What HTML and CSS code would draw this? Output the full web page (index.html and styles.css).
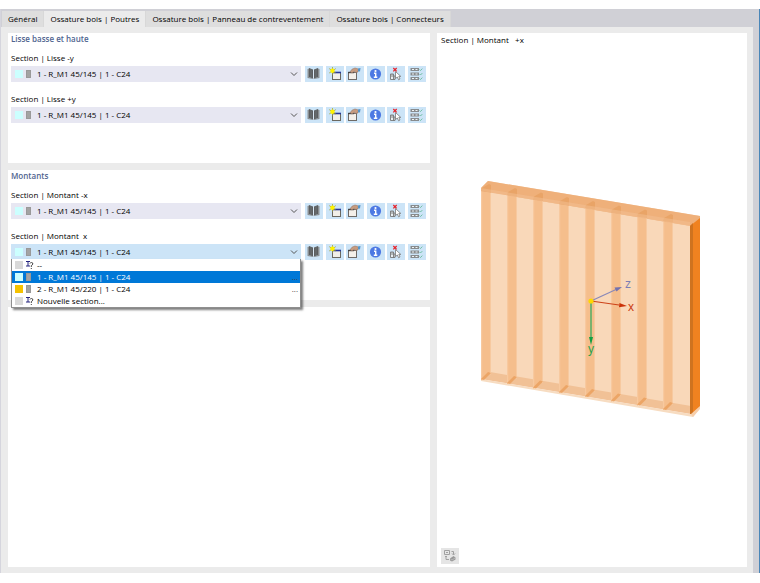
FILE: index.html
```html
<!DOCTYPE html>
<html lang="fr">

<head>
    <meta charset="UTF-8">
    <meta name="viewport" content="width=device-width, initial-scale=1.0">
    <title>Ossature bois | Poutres</title>
    <link rel="stylesheet" href="styles.css">
</head>

<body>
    <!-- shared icons -->
    <svg class="sprite" aria-hidden="true">
        <symbol id="icon-chevron" viewBox="0 0 10 8">
            <path d="M2 2.5 L5 5.5 L8 2.5" fill="none" stroke="#555" stroke-width="1" />
        </symbol>
        <symbol id="icon-book" viewBox="0 0 18 16">
            <path d="M2.5 3 L4 2.5 V11 L8 12.5 H9 L13 11 V2.5 L14.5 3 V12 L9 13 H8 L2.5 12 Z" fill="#8b8f92" />
            <path d="M4 2 L8 3.5 V12.5 L4 11 Z" fill="#5c5f61" />
            <path d="M13 2 L9 3.5 V12.5 L13 11 Z" fill="#5c5f61" />
            <path d="M6 3 V11.5 M11 3 V11.5" stroke="#7b7f81" stroke-width=".6" />
            <path d="M8.5 3.5 V12.5" stroke="#dce9f2" stroke-width=".8" />
        </symbol>
        <symbol id="icon-new" viewBox="0 0 18 16">
            <rect x="6.5" y="6.5" width="8" height="7" fill="#f1efe9" stroke="#6b6860" />
            <path d="M6 6.5 H15" stroke="#27379b" stroke-width="1.6" />
            <path d="M6.5 1 V8.5 M3.2 2.6 L9.8 7 M3.2 7 L9.8 2.6" stroke="#a9a832" stroke-width=".8" />
            <circle cx="6.5" cy="4.8" r="2.2" fill="#fff200" />
        </symbol>
        <symbol id="icon-edit" viewBox="0 0 18 16">
            <rect x="2.5" y="6.5" width="8" height="7" fill="#f4f0ea" stroke="#6e6a66" />
            <path d="M2 6.5 H8" stroke="#444" stroke-width="1.4" />
            <path d="M4 5.8 L6 3.2 L9 2 L12.5 3 L12 6 L9 6.5 L8.5 5.2 L6 7 Z" fill="#c79c80" stroke="#8b6d5c" stroke-width=".5" />
            <path d="M12 2.6 L14.5 2 L14 5.5 L12 5.2 Z" fill="#5596cb" />
        </symbol>
        <symbol id="icon-info" viewBox="0 0 18 16">
            <circle cx="8.5" cy="8" r="5.6" fill="#4d79e3" />
            <circle cx="8.5" cy="5" r="1.1" fill="#fff" />
            <path d="M7 7.2 H8.7 V11 M6.8 11.3 H10.3" fill="none" stroke="#fff" stroke-width="1.4" />
        </symbol>
        <symbol id="icon-pick" viewBox="0 0 18 16">
            <path d="M3.5 8 H6.5 V13.5 H3.5 Z M5 8 V11 M6.5 10 H8 V13.5 H6" fill="#e8eef2" stroke="#777" stroke-width=".9" />
            <path d="M8.5 5.5 V12.5 L10.3 11 L11.6 13.8 L13 13 L11.8 10.4 H13.8 Z" fill="#fff" stroke="#777" stroke-width=".8" />
            <path d="M6.3 2 L9.7 5.4 M9.7 2 L6.3 5.4" stroke="#e7262e" stroke-width="1.3" />
        </symbol>
        <symbol id="icon-list" viewBox="0 0 18 16">
            <g fill="#888b8d">
                <rect x="2.5" y="2" width="8.5" height="3" />
                <rect x="2.5" y="6.5" width="8.5" height="3" />
                <rect x="2.5" y="11" width="8.5" height="3" />
            </g>
            <path d="M4 3.5 H6 M7.5 3.5 H9.5 M4 8 H6 M7.5 8 H9.5 M4 12.5 H6 M7.5 12.5 H9.5" stroke="#edf2f5" stroke-width="1" />
            <path d="M11.5 3.5 L12.5 4.5 L14.3 2.6 M11.5 8 L12.5 9 L14.3 7.1 M11.5 12.5 L12.5 13.5 L14.3 11.6" fill="none" stroke="#68ba9a" stroke-width=".9" />
        </symbol>
        <symbol id="icon-unknown" viewBox="0 0 8 10">
            <path d="M0 1.5 H4 M2 1.5 V6 M0 6 H4" fill="none" stroke="#24247f" stroke-width="1" />
            <path d="M4 3.5 Q4.3 2.4 5.6 2.5 Q7 2.6 6.8 4 Q6.6 5 5.3 5.6 V7 M5.3 8 V9" fill="none" stroke="#444" stroke-width="1" />
        </symbol>
    </svg>

    <div class="window">
        <nav class="tabs" role="tablist">
            <button class="tab" role="tab">Général</button>
            <button class="tab active" role="tab" aria-selected="true">Ossature bois | Poutres</button>
            <button class="tab" role="tab">Ossature bois | Panneau de contreventement</button>
            <button class="tab" role="tab">Ossature bois | Connecteurs</button>
        </nav>

        <main class="content">
            <div class="column">
                <section class="panel group">
                    <h2>Lisse basse et haute</h2>
                    <div class="field">
                        <label for="lisse-moins-y">Section | Lisse -y</label>
                        <div class="row">
                            <div class="combo">
                                <select id="lisse-moins-y">
                                    <option>1 - R_M1 45/145 | 1 - C24</option>
                                </select>
                                <span class="marks"><i class="swatch cyan"></i><i class="profile"></i></span>
                                <svg class="chevron"><use href="#icon-chevron" /></svg>
                            </div>
                            <div class="tools">
                                <button aria-label="Bibliothèque"><svg><use href="#icon-book" /></svg></button>
                                <button aria-label="Nouvelle section"><svg><use href="#icon-new" /></svg></button>
                                <button aria-label="Modifier"><svg><use href="#icon-edit" /></svg></button>
                                <button aria-label="Informations"><svg><use href="#icon-info" /></svg></button>
                                <button aria-label="Sélectionner"><svg><use href="#icon-pick" /></svg></button>
                                <button aria-label="Liste"><svg><use href="#icon-list" /></svg></button>
                            </div>
                        </div>
                    </div>
                    <div class="field">
                        <label for="lisse-plus-y">Section | Lisse +y</label>
                        <div class="row">
                            <div class="combo">
                                <select id="lisse-plus-y">
                                    <option>1 - R_M1 45/145 | 1 - C24</option>
                                </select>
                                <span class="marks"><i class="swatch cyan"></i><i class="profile"></i></span>
                                <svg class="chevron"><use href="#icon-chevron" /></svg>
                            </div>
                            <div class="tools">
                                <button aria-label="Bibliothèque"><svg><use href="#icon-book" /></svg></button>
                                <button aria-label="Nouvelle section"><svg><use href="#icon-new" /></svg></button>
                                <button aria-label="Modifier"><svg><use href="#icon-edit" /></svg></button>
                                <button aria-label="Informations"><svg><use href="#icon-info" /></svg></button>
                                <button aria-label="Sélectionner"><svg><use href="#icon-pick" /></svg></button>
                                <button aria-label="Liste"><svg><use href="#icon-list" /></svg></button>
                            </div>
                        </div>
                    </div>
                </section>

                <section class="panel group">
                    <h2>Montants</h2>
                    <div class="field">
                        <label for="montant-moins-x">Section | Montant -x</label>
                        <div class="row">
                            <div class="combo">
                                <select id="montant-moins-x">
                                    <option>1 - R_M1 45/145 | 1 - C24</option>
                                </select>
                                <span class="marks"><i class="swatch cyan"></i><i class="profile"></i></span>
                                <svg class="chevron"><use href="#icon-chevron" /></svg>
                            </div>
                            <div class="tools">
                                <button aria-label="Bibliothèque"><svg><use href="#icon-book" /></svg></button>
                                <button aria-label="Nouvelle section"><svg><use href="#icon-new" /></svg></button>
                                <button aria-label="Modifier"><svg><use href="#icon-edit" /></svg></button>
                                <button aria-label="Informations"><svg><use href="#icon-info" /></svg></button>
                                <button aria-label="Sélectionner"><svg><use href="#icon-pick" /></svg></button>
                                <button aria-label="Liste"><svg><use href="#icon-list" /></svg></button>
                            </div>
                        </div>
                    </div>
                    <div class="field">
                        <label for="montant-x">Section | Montant  x</label>
                        <div class="row">
                            <div class="combo open">
                                <select id="montant-x">
                                    <option>1 - R_M1 45/145 | 1 - C24</option>
                                </select>
                                <span class="marks"><i class="swatch cyan"></i><i class="profile"></i></span>
                                <svg class="chevron"><use href="#icon-chevron" /></svg>
                                <ul class="options" role="listbox" aria-label="Section">
                                    <li role="option"><i class="swatch"></i><svg class="unknown"><use href="#icon-unknown" /></svg><span>--</span></li>
                                    <li role="option" class="selected" aria-selected="true"><i class="swatch cyan"></i><i class="profile"></i><span>1 - R_M1 45/145 | 1 - C24</span><span class="more">...</span></li>
                                    <li role="option"><i class="swatch yellow"></i><i class="profile"></i><span>2 - R_M1 45/220 | 1 - C24</span><span class="more">...</span></li>
                                    <li role="option"><i class="swatch"></i><svg class="unknown"><use href="#icon-unknown" /></svg><span>Nouvelle section...</span></li>
                                </ul>
                            </div>
                            <div class="tools">
                                <button aria-label="Bibliothèque"><svg><use href="#icon-book" /></svg></button>
                                <button aria-label="Nouvelle section"><svg><use href="#icon-new" /></svg></button>
                                <button aria-label="Modifier"><svg><use href="#icon-edit" /></svg></button>
                                <button aria-label="Informations"><svg><use href="#icon-info" /></svg></button>
                                <button aria-label="Sélectionner"><svg><use href="#icon-pick" /></svg></button>
                                <button aria-label="Liste"><svg><use href="#icon-list" /></svg></button>
                            </div>
                        </div>
                    </div>
                </section>

                <section class="panel rest"></section>
            </div>

            <section class="panel preview">
                <p class="preview-title">Section | Montant   +x</p>
                <div class="scene">
                    <svg viewBox="0 0 250 260" role="img" aria-label="Mur à ossature bois">
                        <defs>
                            <g id="stud">
                                <path d="M0 0 L10 1.6 V182 L1 189 L0 189 Z" fill="#f5be8c" />
                                <path d="M0 0 H1.2 V188 H0 Z M9 1.5 H10 V183 L9 184 Z" fill="#f7c99f" />
                                <path d="M0 0 L1 -3 L8 -7 L10 -6 V1.6 Z" fill="#e0924c" />
                                <path d="M0 188 L7 181 L10 182 L3 189 Z" fill="#eca566" />
                            </g>
                        </defs>
                        <!-- panel faces -->
                        <path d="M16 21 L226 55 V244 L16 209 Z" fill="#f9d8b9" />
                        <path d="M25 202 L226 236 V244 L16 209 Z" fill="#f1c196" />
                        <path d="M16 209 L226 244 L235 238 L228 247 L16 211 Z" fill="#f7dcc1" />
                        <path d="M16 18 L23 11 L235 46 V49 L226 56 L16 21 Z" fill="#efb07a" />
                        <!-- studs -->
                        <use href="#stud" x="16" y="21" />
                        <use href="#stud" x="42" y="25" />
                        <use href="#stud" x="68" y="29.5" />
                        <use href="#stud" x="94" y="34" />
                        <use href="#stud" x="120" y="38" />
                        <use href="#stud" x="146" y="42.5" />
                        <use href="#stud" x="172" y="46.5" />
                        <use href="#stud" x="198" y="51" />
                        <path d="M16 18 L23 11 L235 46 V49 L226 56 L16 21 Z" fill="#efb07a" opacity=".6" />
                        <path d="M16 18 L225 52 V56 L16 21 Z" fill="#f3bf93" opacity=".5" />
                        <!-- end stud -->
                        <path d="M225 56 L235 48 V237 L227 244 H225 Z" fill="#f08220" />
                        <path d="M225 56 L228 53 V243 L227 244 H225 Z" fill="#cf731f" />
                        <path d="M226 244 L235 236 V239 L228 247 Z" fill="#f6ceaa" />
                        <!-- axes -->
                        <path d="M126 131 L151 119.5" stroke="#8988b8" stroke-width="1.2" />
                        <path d="M157 117 L149.5 117.5 L151.5 121.5 Z" fill="#7472ae" />
                        <path d="M126 131 L154 135" stroke="#cc4218" stroke-width="1.2" />
                        <path d="M162 136 L154.5 133 L154 137.2 Z" fill="#cb3208" />
                        <path d="M126 131 V168" stroke="#51ad65" stroke-width="1.5" />
                        <path d="M126 175 L124 167 H128 Z" fill="#12a043" />
                        <circle cx="126" cy="131" r="2.6" fill="#ffd800" />
                        <g class="axis-labels">
                            <text x="160" y="118" fill="#7b7eb5">z</text>
                            <text x="163" y="141" fill="#cb3c12">x</text>
                            <text x="123" y="183" fill="#29a34c">y</text>
                        </g>
                    </svg>
                </div>
                <button class="view-button" aria-label="Changer la vue">
                    <svg viewBox="0 0 18 16">
                        <path d="M3.5 2.5 H8.5 V6.5 H3.5 Z M5 4.5 H7 M10.5 3.5 H12.5 V6.5 M11 5.5 L12.5 7 L14 5.5 M5 8 V11.5 H8 M4 9 L5 8 L6 9" fill="none" stroke="#a0a0a0" stroke-width="1" />
                        <path d="M9 10.5 L12.5 8 L14.5 9.5 V11.5 L11 13.5 L9 12.5 Z" fill="#999" />
                        <path d="M9.5 11 L11 12 L14 10" fill="none" stroke="#ccc" stroke-width=".6" />
                    </svg>
                </button>
            </section>
        </main>
    </div>
</body>

</html>
```

FILE: styles.css
```css
* {
    box-sizing: border-box;
}

body {
    display: flex;
    min-height: 100vh;
    margin: 0;
    padding: 9px 0 10px;
    background: #fff;
    color: #000;
    font-family: "Open Sans", "Noto Sans", sans-serif;
    font-size: 8px;
    font-weight: 500;
    line-height: 12px;
}

button,
select {
    margin: 0;
    padding: 0;
    border: 0;
    border-radius: 0;
    color: inherit;
    font: inherit;
}

svg {
    display: block;
}

.sprite {
    position: absolute;
    width: 0;
    height: 0;
}

.window {
    display: flex;
    flex: 1;
    flex-direction: column;
    border-left: 1px solid #d5d5dd;
    border-right: 1px solid #4a86b8;
    background: #d0d0d6;
}

/* Tabs */
.tabs {
    display: flex;
    padding: 2px 1px 0;
}

.tab {
    height: 16px;
    padding: 0 6px;
    border-right: 1px solid #d8d8d8;
    background: #dedede;
    white-space: nowrap;
}

.tab.active {
    background: #ebebeb;
}

/* Content */
.content {
    display: grid;
    flex: 1;
    grid-template-columns: 422fr 310fr;
    gap: 7px;
    margin-right: 6px;
    padding: 6px 6px 6px 7px;
    background: #ebebeb;
}

.column {
    display: flex;
    flex-direction: column;
    gap: 7px;
}

.panel {
    background: #fff;
}

.group {
    display: flex;
    flex-direction: column;
    gap: 11px;
    padding: 0 4px 40px 3px;
}

.rest {
    flex: 1;
}

h2 {
    margin: 0 0 -4px;
    color: #4f648f;
    font-size: 8px;
    font-weight: 600;
}

.field {
    display: flex;
    flex-direction: column;
    gap: 2px;
}

.field label,
.preview-title {
    white-space: pre;
}

.row {
    display: flex;
    gap: 4px;
}

/* Drop-down */
.combo {
    position: relative;
    flex: 1;
}

.combo select {
    display: block;
    width: 100%;
    height: 16px;
    padding-left: 26px;
    appearance: none;
    background: #e7e7f2;
}

.combo.open select {
    background: #cce4f7;
}

.marks {
    position: absolute;
    top: 4px;
    left: 4px;
    display: flex;
    pointer-events: none;
}

.swatch {
    width: 8px;
    height: 8px;
    margin-right: 3px;
    background: #d9d9d9;
}

.swatch.cyan {
    background: #ccffff;
}

.swatch.yellow {
    background: #f5c200;
}

.profile {
    width: 5px;
    height: 8px;
    margin-right: 6px;
    border: 1px solid #999;
    background: #a3a3a3;
}

.chevron {
    position: absolute;
    top: 4px;
    right: 2px;
    width: 10px;
    height: 8px;
    pointer-events: none;
}

.options {
    position: absolute;
    z-index: 1;
    top: 15px;
    left: 0;
    width: 100%;
    margin: 0;
    padding: 0;
    border: 1px solid #8f8f8f;
    border-top: 0;
    background: #fff;
    box-shadow: 2px 2px 2px rgba(0, 0, 0, 0.5);
    list-style: none;
}

.options li {
    display: flex;
    align-items: center;
    height: 12px;
    padding: 0 2px 0 3px;
}

.options .selected {
    background: #0078d7;
    color: #fff;
}

.unknown {
    width: 8px;
    height: 10px;
    margin-right: 3px;
}

.more {
    margin-left: auto;
    color: #444;
}

/* Icon buttons */
.tools {
    display: flex;
    justify-content: space-between;
    width: 121px;
}

.tools button {
    width: 18px;
    height: 16px;
    background: #cce4f7;
}

.tools svg,
.view-button svg {
    width: 18px;
    height: 16px;
}

/* Preview */
.preview {
    display: flex;
    flex-direction: column;
    padding: 1px 4px 3px;
}

.preview-title {
    margin: 0;
}

.scene {
    display: flex;
    flex: 1;
    align-items: center;
    justify-content: center;
    padding: 6px 4px 0 0;
}

.scene svg {
    width: 250px;
    height: 260px;
}

.axis-labels {
    font-family: "Liberation Sans", Arial, sans-serif;
    font-size: 12px;
}

.view-button {
    width: 18px;
    height: 16px;
    background: #e5e5e5;
}
```
